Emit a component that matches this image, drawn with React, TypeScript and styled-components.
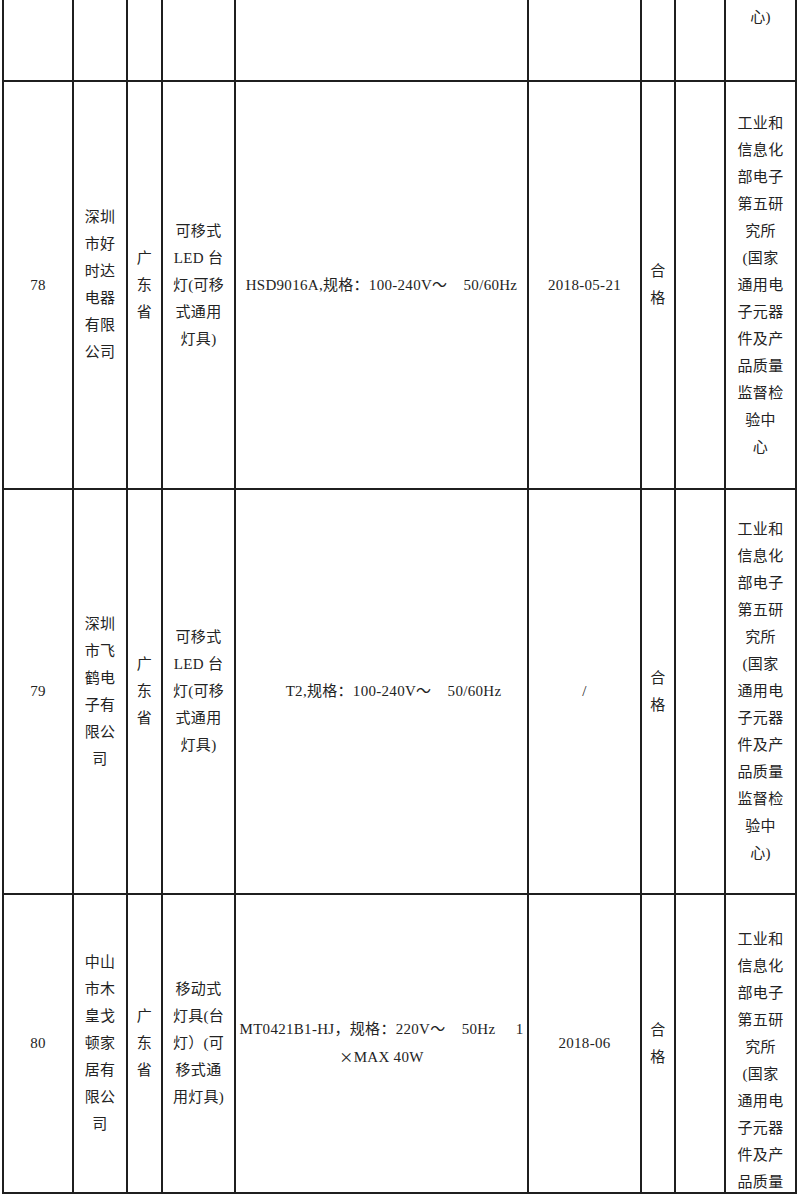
import React from "react";
import styled, { createGlobalStyle } from "styled-components";

const Global = createGlobalStyle`
  html, body { margin: 0; padding: 0; background: #ffffff; }
  body { font-family: "Liberation Serif", "Noto Sans CJK SC", serif; }
`;

const LINE = "#1f1f1f";

const Page = styled.div`
  width: 800px;
  padding-left: 2px;
  box-sizing: border-box;
`;

const Table = styled.div`
  width: 795px;
  border-left: 2px solid ${LINE};
  box-sizing: border-box;
`;

const Row = styled.div<{ $h: number }>`
  display: grid;
  grid-template-columns: 70px 54px 35px 73px 293px 113px 34px 50px 71px;
  grid-template-rows: minmax(0, 1fr);
  height: ${(p) => p.$h}px;
  border-bottom: 2px solid ${LINE};
  box-sizing: border-box;
  overflow: hidden;
`;

const Cell = styled.div<{ $top?: number }>`
  box-sizing: border-box;
  min-height: 0;
  border-right: 2px solid ${LINE};
  display: flex;
  flex-direction: column;
  align-items: center;
  justify-content: ${(p) => (p.$top !== undefined ? "flex-start" : "center")};
  padding-top: ${(p) => p.$top ?? 0}px;
  overflow: hidden;
  font-size: 15px;
  line-height: 27px;
  color: #232323;
  text-align: center;
`;

const Line = styled.span`
  display: block;
  white-space: pre;
  letter-spacing: 0.3px;
`;

const Wide = styled.span`
  font-family: "Noto Sans CJK SC", sans-serif;
  font-size: 14px;
`;

type RowData = {
  h: number;
  no?: string;
  company?: string[];
  province?: string[];
  product?: string[];
  spec?: React.ReactNode[];
  date?: string[];
  result?: string[];
  org?: string[];
  orgTop?: number;
};

const org = [
  "工业和",
  "信息化",
  "部电子",
  "第五研",
  "究所",
  "(国家",
  "通用电",
  "子元器",
  "件及产",
  "品质量",
];

const rows: RowData[] = [
  { h: 82, org: ["心)"], orgTop: 4 },
  {
    h: 408,
    no: "78",
    company: ["深圳", "市好", "时达", "电器", "有限", "公司"],
    province: ["广", "东", "省"],
    product: ["可移式", "LED 台", "灯(可移", "式通用", "灯具)"],
    spec: ["HSD9016A,规格：100-240V～    50/60Hz"],
    date: ["2018-05-21"],
    result: ["合", "格"],
    org: [...org, "监督检", "验中", "心"],
  },
  {
    h: 405,
    no: "79",
    company: ["深圳", "市飞", "鹤电", "子有", "限公", "司"],
    province: ["广", "东", "省"],
    product: ["可移式", "LED 台", "灯(可移", "式通用", "灯具)"],
    spec: ["      T2,规格：100-240V～    50/60Hz"],
    date: ["/"],
    result: ["合", "格"],
    org: [...org, "监督检", "验中", "心)"],
  },
  {
    h: 299,
    no: "80",
    company: ["中山", "市木", "皇戈", "顿家", "居有", "限公", "司"],
    province: ["广", "东", "省"],
    product: ["移动式", "灯具(台", "灯）(可", "移式通", "用灯具)"],
    spec: [
      "MT0421B1-HJ，规格：220V～    50Hz     1",
      <>
        <Wide>×</Wide>MAX 40W
      </>,
    ],
    date: ["2018-06"],
    result: ["合", "格"],
    org: [...org],
    orgTop: 31,
  },
];

const Lines: React.FC<{ items?: React.ReactNode[] }> = ({ items }) => (
  <>
    {(items ?? []).map((t, i) => (
      <Line key={i}>{t}</Line>
    ))}
  </>
);

export default function App() {
  return (
    <Page>
      <Global />
      <Table>
        {rows.map((r, i) => (
          <Row key={i} $h={r.h}>
            <Cell>{r.no && <Line>{r.no}</Line>}</Cell>
            <Cell>
              <Lines items={r.company} />
            </Cell>
            <Cell>
              <Lines items={r.province} />
            </Cell>
            <Cell>
              <Lines items={r.product} />
            </Cell>
            <Cell>
              <Lines items={r.spec} />
            </Cell>
            <Cell>
              <Lines items={r.date} />
            </Cell>
            <Cell>
              <Lines items={r.result} />
            </Cell>
            <Cell />
            <Cell $top={r.orgTop}>
              <Lines items={r.org} />
            </Cell>
          </Row>
        ))}
      </Table>
    </Page>
  );
}
